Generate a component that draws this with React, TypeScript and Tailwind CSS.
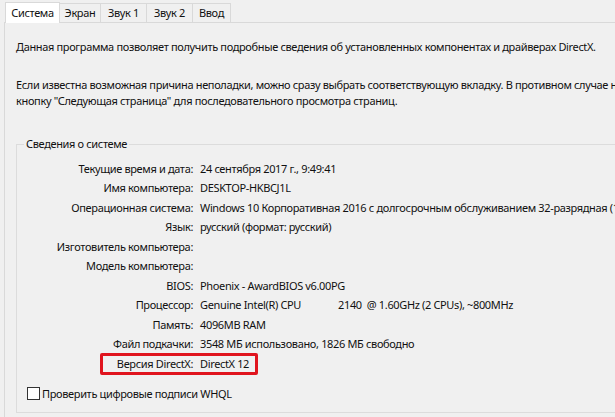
import React from 'react'

const tabs: [string, string][] = [
  ['Система', 'w-[55px]'],
  ['Экран', 'w-[41px]'],
  ['Звук 1', 'w-[46px]'],
  ['Звук 2', 'w-[46px]'],
  ['Ввод', 'w-[38px]'],
]

const rows: [string, React.ReactNode][] = [
  ['Текущие время и дата:', '24 сентября 2017 г., 9:49:41'],
  ['Имя компьютера:', 'DESKTOP-HKBCJ1L'],
  ['Операционная система:', 'Windows 10 Корпоративная 2016 с долгосрочным обслуживанием 32-разрядная (10.0, сборка 14393)'],
  ['Язык:', 'русский (формат: русский)'],
  ['Изготовитель компьютера:', ''],
  ['Модель компьютера:', ''],
  ['BIOS:', 'Phoenix - AwardBIOS v6.00PG'],
  [
    'Процессор:',
    <span className="whitespace-pre">
      <span className="inline-block w-[138px]">Genuine Intel(R) CPU</span>2140  @ 1.60GHz (2 CPUs), ~800MHz
    </span>,
  ],
  ['Память:', '4096MB RAM'],
  ['Файл подкачки:', '3548 МБ использовано, 1826 МБ свободно'],
]

export default function App() {
  return (
    <div className="w-[615px] h-[417px] overflow-hidden bg-[#f0f0f0] text-[11px] leading-[16px] tracking-[-0.35px] text-[#111] font-['Noto_Sans',sans-serif]">
      {/* tab strip */}
      <div className="flex items-end h-[23px] pl-[5px] relative z-10">
        {tabs.map(([t, w], i) =>
          i === 0 ? (
            <div key={t} className={`${w} h-[21px] bg-white border border-b-0 border-[#d9d9d9] flex items-center justify-center`}>
              {t}
            </div>
          ) : (
            <div key={t} className={`${w} h-[19px] mb-px bg-[#f0f0f0] border border-b-0 border-l-0 border-[#d9d9d9] flex items-center justify-center`}>
              {t}
            </div>
          )
        )}
      </div>

      {/* page */}
      <div className="-mt-px ml-[4px] h-[400px] border-t border-l border-[#d9d9d9] bg-[#f0f0f0] whitespace-nowrap">
        <p className="pl-[11px] pt-[16px]">
          Данная программа позволяет получить подробные сведения об установленных компонентах и драйверах DirectX.
        </p>
        <p className="pl-[11px] pt-[22px]">
          Если известна возможная причина неполадки, можно сразу выбрать соответствующую вкладку. В противном случае нажмите
        </p>
        <p className="pl-[11px]">кнопку "Следующая страница" для последовательного просмотра страниц.</p>

        <fieldset className="ml-[11px] mt-[28px] w-[700px] h-[276px] border border-[#dcdcdc] px-0 pb-0">
          <legend className="ml-[7px] px-[2px] leading-[14px]">Сведения о системе</legend>
          <div className="mt-[8px]">
            {rows.map(([k, v]) => (
              <div key={k} className="flex h-[19.5px] items-center">
                <span className="w-[176px] text-right">{k}</span>
                <span className="ml-[7px]">{v}</span>
              </div>
            ))}
            <div className="flex h-[19.5px] items-center">
              <div className="ml-[83px] h-[22px] w-[158px] border-[3px] border-[#e0141e] rounded-[2px] flex items-center">
                <span className="w-[90px] text-right">Версия DirectX:</span>
                <span className="ml-[7px]">DirectX 12</span>
              </div>
            </div>
          </div>
          <label className="flex items-center mt-[12px] ml-[10px]">
            <span className="w-[13px] h-[13px] border border-[#333] bg-white" />
            <span className="ml-[2px]">Проверить цифровые подписи WHQL</span>
          </label>
        </fieldset>
      </div>
    </div>
  )
}
